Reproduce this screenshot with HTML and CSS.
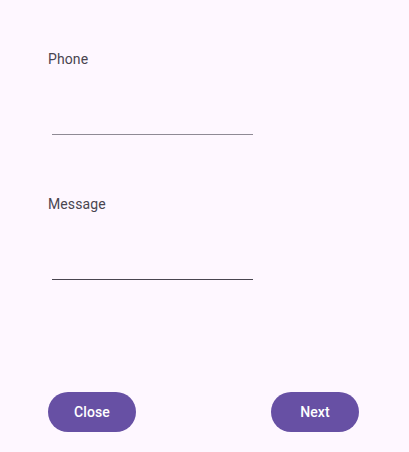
FILE: index.html
```html
<!DOCTYPE html>
<html>
<head>
<meta charset="utf-8">
<link rel="stylesheet" href="styles.css">
</head>
<body>
<div class="page">
  <div class="field">
    <label class="label">Phone</label>
    <div class="input input-idle"></div>
  </div>
  <div class="field field-second">
    <label class="label">Message</label>
    <div class="input input-dark"></div>
  </div>
  <div class="actions">
    <button class="btn">Close</button>
    <button class="btn">Next</button>
  </div>
</div>
</body>
</html>
```
FILE: styles.css
```css
html, body {
  margin: 0;
  padding: 0;
  background: #fef7ff;
}
.page {
  box-sizing: border-box;
  height: 452px;
  padding: 49px 50px 20px 48px;
  display: flex;
  flex-direction: column;
  font-family: Roboto, "Liberation Sans", sans-serif;
}
.field {
  display: flex;
  flex-direction: column;
}
.field-second {
  margin-top: 59px;
}
.label {
  font-size: 14px;
  line-height: 20px;
  color: #49454f;
  letter-spacing: 0.1px;
}
.input {
  width: 201px;
  margin-left: 4px;
  height: 65px;
}
.input-idle {
  border-bottom: 1px solid #8f8a95;
}
.input-dark {
  border-bottom: 1px solid #49454f;
}
.actions {
  margin-top: auto;
  display: flex;
  justify-content: space-between;
}
.btn {
  width: 88px;
  height: 40px;
  border: none;
  border-radius: 20px;
  background: #6750a4;
  color: #ffffff;
  font-family: Roboto, "Liberation Sans", sans-serif;
  font-weight: 500;
  font-size: 14px;
  letter-spacing: 0.1px;
  padding: 0;
}
```
